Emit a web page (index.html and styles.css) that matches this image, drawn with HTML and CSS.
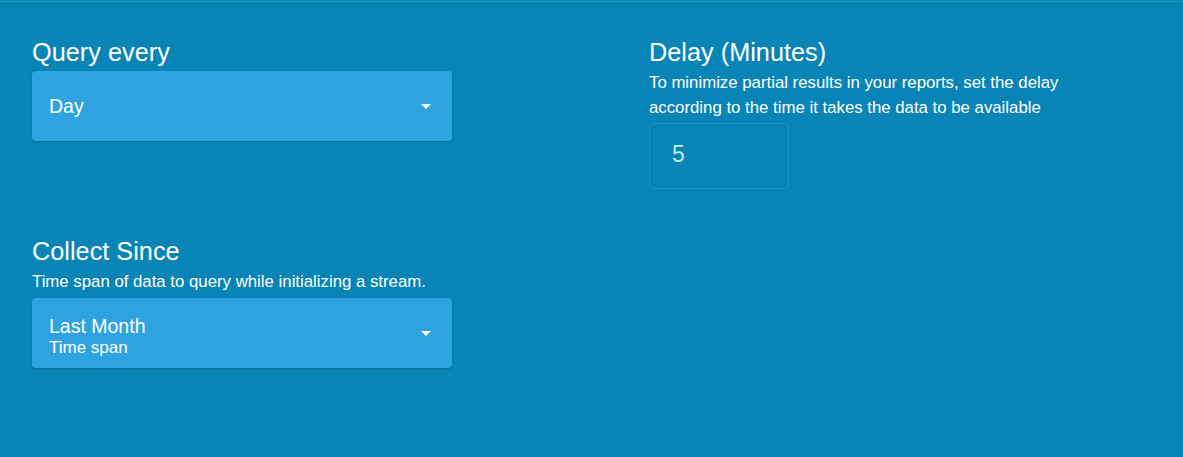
FILE: index.html
```html
<!DOCTYPE html>
<html>
<head>
<meta charset="utf-8">
<link rel="stylesheet" href="styles.css">
</head>
<body>
<div class="page">
  <div class="grid">
    <div class="col">
      <div class="field">
        <div class="label">Query every</div>
        <div class="select">
          <div class="select-text">
            <div class="value">Day</div>
          </div>
          <span class="caret"></span>
        </div>
      </div>
      <div class="field field-gap">
        <div class="label">Collect Since</div>
        <div class="hint">Time span of data to query while initializing a stream.</div>
        <div class="select">
          <div class="select-text select-text-two">
            <div class="value">Last Month</div>
            <div class="sub">Time span</div>
          </div>
          <span class="caret"></span>
        </div>
      </div>
    </div>
    <div class="col">
      <div class="field">
        <div class="label">Delay (Minutes)</div>
        <div class="hint hint-tight">To minimize partial results in your reports, set the delay<br>according to the time it takes the data to be available</div>
        <div class="input"><span class="input-value">5</span></div>
      </div>
    </div>
  </div>
</div>
</body>
</html>
```
FILE: styles.css
```css
html, body {
  margin: 0;
  padding: 0;
  background: #0984b7;
  height: 100%;
}
body {
  font-family: "Liberation Sans", Arial, sans-serif;
  color: #ffffff;
  padding-top: 1px;
  box-sizing: border-box;
}
.page {
  border-top: 1px solid #2a95c3;
  padding: 35px 32px 0 32px;
}
.grid {
  display: grid;
  grid-template-columns: 617px 1fr;
}
.col {
  display: flex;
  flex-direction: column;
}
.field {
  display: flex;
  flex-direction: column;
}
.field-gap {
  margin-top: 95px;
}
.label {
  font-size: 25.3px;
  line-height: 30px;
  margin-bottom: 4px;
}
.hint {
  font-size: 16.8px;
  line-height: 25px;
  margin-top: -1px;
  margin-bottom: 4px;
}
.hint-tight {
  margin-bottom: 3px;
}
.select {
  width: 420px;
  height: 70px;
  box-sizing: border-box;
  background: #2fa3df;
  border-radius: 4px;
  box-shadow: 0 1px 2px rgba(0, 0, 0, 0.18);
  display: flex;
  align-items: center;
  padding: 0 21px 0 17px;
}
.select-text {
  flex: 1;
  display: flex;
  flex-direction: column;
}
.select-text-two {
  padding-top: 6px;
}
.value {
  font-size: 19.5px;
  line-height: 22px;
}
.sub {
  font-size: 17px;
  line-height: 21px;
}
.caret {
  width: 0;
  height: 0;
  border-left: 5.5px solid transparent;
  border-right: 5.5px solid transparent;
  border-top: 5px solid #ffffff;
}
.input {
  width: 140px;
  height: 66px;
  box-sizing: border-box;
  border: 1px solid #1b92c7;
  border-radius: 4px;
  display: flex;
  align-items: center;
  padding: 0 0 3px 22px;
}
.input-value {
  font-size: 23px;
  color: #c4e7f8;
}
```
